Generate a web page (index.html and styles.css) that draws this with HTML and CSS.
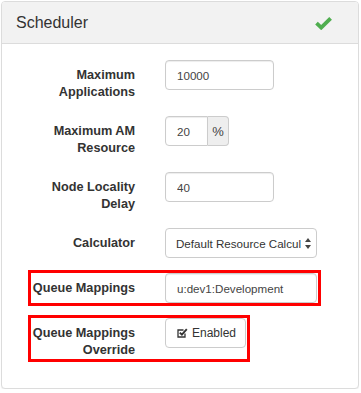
FILE: index.html
```html
<!DOCTYPE html>
<html lang="en">
<head>
    <meta charset="UTF-8">
    <meta name="viewport" content="width=device-width, initial-scale=1.0">
    <title>Scheduler</title>
    <link rel="stylesheet" href="styles.css">
</head>
<body>
<div class="panel">
    <div class="panel-heading">
        <span class="panel-title">Scheduler</span>
        <!-- status check -->
        <svg class="status-ok" width="19" height="14" viewBox="0 0 19 14">
            <path d="M2.5 7.2 L7.2 11.6 L16.6 2.3" fill="none" stroke="#4fae4f" stroke-width="3.8" stroke-linejoin="miter"/>
        </svg>
    </div>

    <div class="panel-body">
        <div class="form-group">
            <label class="control-label">Maximum Applications</label>
            <div class="control">
                <input class="form-control input-md" type="text" value="10000">
            </div>
        </div>

        <div class="form-group">
            <label class="control-label">Maximum AM Resource</label>
            <div class="control input-group">
                <input class="form-control input-sm" type="text" value="20">
                <span class="input-addon">%</span>
            </div>
        </div>

        <div class="form-group">
            <label class="control-label">Node Locality Delay</label>
            <div class="control">
                <input class="form-control input-md" type="text" value="40">
            </div>
        </div>

        <div class="form-group">
            <label class="control-label">Calculator</label>
            <div class="control">
                <div class="form-control select">
                    <span class="select-text">Default Resource Calculator</span>
                    <svg class="select-arrows" width="6" height="11" viewBox="0 0 6 11">
                        <path d="M3 0 L6 4 L0 4 Z M0 7 L6 7 L3 11 Z" fill="#444"/>
                    </svg>
                </div>
            </div>
        </div>

        <div class="form-group highlight">
            <label class="control-label">Queue Mappings</label>
            <div class="control">
                <input class="form-control input-lg" type="text" value="u:dev1:Development">
            </div>
        </div>

        <div class="form-group highlight">
            <label class="control-label">Queue Mappings Override</label>
            <div class="control">
                <button class="btn" type="button">
                    <svg class="check-box" width="11" height="10" viewBox="0 0 11 10">
                        <path d="M8 5.5 V9 H1 V2 H6.5" fill="none" stroke="#333" stroke-width="1.3"/>
                        <path d="M2.8 4.6 L4.9 6.7 L9.8 1.2" fill="none" stroke="#333" stroke-width="1.9"/>
                    </svg>
                    Enabled
                </button>
            </div>
        </div>
    </div>
</div>
</body>
</html>
```

FILE: styles.css
```css
body {
    margin: 0;
    font-family: 'Liberation Sans', Arial, sans-serif;
    color: #333;
    background-color: #fff;
}

.panel {
    margin: 1px 2px 0 1px;
    border: 1px solid #dcdcdc;
    border-radius: 4px;
    background-color: #fff;
    box-shadow: 0 1px 1px rgba(0, 0, 0, 0.06);
}

.panel-heading {
    display: flex;
    align-items: center;
    justify-content: space-between;
    height: 41px;
    padding: 0 25px 0 14px;
    background-color: #f2f2f2;
    border-bottom: 1px solid #dcdcdc;
    border-radius: 3px 3px 0 0;
}

.panel-title {
    font-size: 16px;
    color: #333;
}

.status-ok {
    display: block;
}

.panel-body {
    padding: 13px 0 17px 26px;
}

.form-group {
    display: flex;
    width: fit-content;
    border: 3px solid transparent;
    padding-right: 1px;
    margin-bottom: 9px;
}

.form-group.highlight {
    border-color: #f00;
}

.control-label {
    width: 104px;
    padding-top: 7px;
    text-align: right;
    font-size: 12.7px;
    font-weight: bold;
    line-height: 17px;
    color: #333;
}

.control {
    margin-left: 30px;
}

.form-control {
    box-sizing: border-box;
    height: 30px;
    padding: 0 11px;
    font-family: 'Liberation Sans', Arial, sans-serif;
    font-size: 11.6px;
    color: #444;
    background-color: #fff;
    border: 1px solid #ccc;
    border-radius: 4px;
    box-shadow: inset 0 1px 1px rgba(0, 0, 0, 0.075);
    outline: none;
}

.input-md {
    width: 109px;
}

.input-lg {
    width: 152px;
}

.input-group {
    display: flex;
}

.input-group .input-sm {
    width: 43px;
    border-radius: 4px 0 0 4px;
}

.input-addon {
    box-sizing: border-box;
    width: 21px;
    height: 30px;
    display: flex;
    align-items: center;
    justify-content: center;
    font-size: 13px;
    color: #444;
    background-color: #eee;
    border: 1px solid #ccc;
    border-left: 0;
    border-radius: 0 4px 4px 0;
}

.select {
    display: flex;
    align-items: center;
    width: 152px;
    padding: 0 5px 0 10px;
    box-shadow: none;
}

.select-text {
    flex: 1;
    overflow: hidden;
    white-space: nowrap;
    color: #333;
}

.select-arrows {
    margin-left: 4px;
    flex-shrink: 0;
}

.btn {
    box-sizing: border-box;
    display: flex;
    align-items: center;
    gap: 4px;
    height: 30px;
    width: 81px;
    padding: 0 0 0 11px;
    font-family: 'Liberation Sans', Arial, sans-serif;
    font-size: 12px;
    color: #333;
    background-color: #fff;
    border: 1px solid #ccc;
    border-radius: 4px;
}

.check-box {
    display: block;
    margin-top: -1px;
}
```
